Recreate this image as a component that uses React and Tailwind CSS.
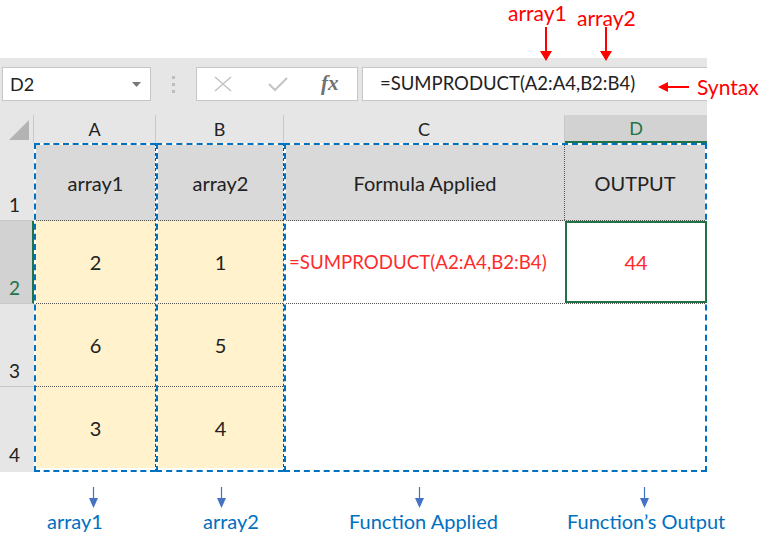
import React from 'react';

const FONT = { fontFamily: 'Lato, "Open Sans", Arial, sans-serif' };

const DownArrow = ({ color = '#ff0000', h = 35, w = 12, stroke = 2 }) => (
  <svg width={w} height={h} viewBox={`0 0 ${w} ${h}`}>
    <line x1={w / 2} y1="0" x2={w / 2} y2={h - 8} stroke={color} strokeWidth={stroke} />
    <polygon points={`0,${h - 10} ${w},${h - 10} ${w / 2},${h}`} fill={color} />
  </svg>
);

const FormulaBar = () => (
  <div className="flex items-start h-[57px] pt-[9px]">
    <div className="ml-[2px] w-[149px] h-[34px] bg-white border border-[#c6c6c6] flex items-center justify-between pl-[7px] pr-[9px]">
      <span className="text-[18px] text-[#222]">D2</span>
      <svg width="9" height="5" viewBox="0 0 9 5">
        <polygon points="0,0 9,0 4.5,5" fill="#777" />
      </svg>
    </div>
    <div className="w-[45px] h-[34px] flex flex-col items-center justify-center gap-[4px]">
      <div className="w-[3px] h-[3px] bg-[#bdbdbd]" />
      <div className="w-[3px] h-[3px] bg-[#bdbdbd]" />
      <div className="w-[3px] h-[3px] bg-[#bdbdbd]" />
    </div>
    <div className="w-[162px] h-[34px] bg-white border border-[#c6c6c6] flex items-center">
      <svg className="ml-[16px]" width="20" height="16" viewBox="0 0 20 16">
        <path d="M2 1 L18 15 M18 1 L2 15" stroke="#c4c4c4" strokeWidth="1.6" />
      </svg>
      <svg className="ml-[35px]" width="20" height="16" viewBox="0 0 20 16">
        <path d="M1 8 L7 14 L19 2" stroke="#c4c4c4" strokeWidth="2" fill="none" />
      </svg>
      <span
        className="ml-[33px] text-[21px] italic font-bold text-[#707070]"
        style={{ fontFamily: '"Liberation Serif", "DejaVu Serif", serif' }}
      >
        fx
      </span>
    </div>
    <div className="ml-[4px] flex-1 h-[34px] bg-white border-y border-l border-[#c6c6c6] flex items-center pl-[17px]">
      <span className="text-[18.5px] text-[#222]">=SUMPRODUCT(A2:A4,B2:B4)</span>
    </div>
  </div>
);

const ColumnHeaders = () => (
  <div className="flex h-[28px] text-[18px] text-[#222]">
    <div className="w-[34px] border-r border-[#c8c8c8] flex items-end justify-end pr-[4px] pb-[3px]">
      <svg width="20" height="20" viewBox="0 0 20 20">
        <polygon points="20,0 20,20 0,20" fill="#b3b3b3" />
      </svg>
    </div>
    <div className="w-[122px] border-r border-[#c8c8c8] flex items-center justify-center">A</div>
    <div className="w-[128px] border-r border-[#c8c8c8] flex items-center justify-center">B</div>
    <div className="w-[281px] border-r border-[#c8c8c8] flex items-center justify-center">C</div>
    <div className="w-[142px] bg-[#d2d2d2] border-b-2 border-[#217346] text-[#217346] flex items-center justify-center">
      D
    </div>
  </div>
);

const RowHeaders = () => (
  <div className="w-[34px] flex flex-col text-[19px] text-[#222]">
    <div className="h-[78px] border-b border-[#c8c8c8] flex items-end pl-[9px] pb-[1px]">1</div>
    <div className="h-[83px] bg-[#d2d2d2] border-r-2 border-[#217346] border-b border-b-[#c8c8c8] text-[#217346] flex items-end pl-[9px] pb-[1px]">
      2
    </div>
    <div className="h-[83px] border-b border-[#c8c8c8] flex items-end pl-[9px] pb-[1px]">3</div>
    <div className="h-[83px] flex items-end pl-[9px] pb-[1px]">4</div>
  </div>
);

const ArrayColumn = ({ width, title, values }) => (
  <div
    className={`${width} flex flex-col border-y-2 border-l-2 border-dashed border-[#0070c0] border-r border-r-[#444] text-[20px] text-[#222]`}
  >
    <div className="h-[76px] bg-[#d9d9d9] border-b border-dotted border-[#555] flex items-center justify-center">
      {title}
    </div>
    <div className="h-[83px] bg-[#fff2cc] border-b border-dotted border-[#555] flex items-center justify-center">
      {values[0]}
    </div>
    <div className="h-[83px] bg-[#fff2cc] border-b border-dotted border-[#555] flex items-center justify-center">
      {values[1]}
    </div>
    <div className="h-[81px] bg-[#fff2cc] flex items-center justify-center">{values[2]}</div>
  </div>
);

const FormulaRange = () => (
  <div className="w-[423px] flex flex-col border-2 border-dashed border-[#0070c0] text-[20px]">
    <div className="h-[76px] flex border-b border-dotted border-[#555] bg-[#d9d9d9] text-[#222]">
      <div className="w-[279px] border-r border-dotted border-[#555] flex items-center justify-center">
        Formula Applied
      </div>
      <div className="flex-1 flex items-center justify-center">OUTPUT</div>
    </div>
    <div className="h-[83px] flex border-b border-dotted border-[#555] text-[#ff2b2b]">
      <div className="w-[279px] flex items-center pl-[3px] text-[18.7px]">=SUMPRODUCT(A2:A4,B2:B4)</div>
      <div className="flex-1 -mr-[2px] border-2 border-[#217346] flex items-center justify-center">44</div>
    </div>
    <div className="h-[166px] bg-white" />
  </div>
);

const Callout = ({ className }) => (
  <div className={`flex flex-col items-center ${className}`}>
    <DownArrow color="#4472c4" h={21} w={9} stroke={1.2} />
  </div>
);

const LeftArrow = () => (
  <svg width="31" height="12" viewBox="0 0 31 12">
    <line x1="8" y1="6" x2="31" y2="6" stroke="#ff0000" strokeWidth="2" />
    <polygon points="0,6 10,1 10,11" fill="#ff0000" />
  </svg>
);

export default function App() {
  return (
    <div className="relative w-[760px] h-[540px] bg-white overflow-hidden" style={FONT}>
      {/* red call-outs above the formula bar */}
      <div className="relative h-[58px]">
        <span className="absolute left-[508px] top-[2px] text-[21px] leading-none text-[#ff0000]">array1</span>
        <span className="absolute left-[577px] top-[7px] text-[21px] leading-none text-[#ff0000]">array2</span>
        <div className="absolute left-[540px] top-[27px] z-10">
          <DownArrow h={34} />
        </div>
        <div className="absolute left-[600px] top-[27px] z-10">
          <DownArrow h={34} />
        </div>
      </div>

      <div className="w-[707px] bg-[#e6e6e6]">
        <FormulaBar />
        <ColumnHeaders />
      </div>
      <div className="absolute left-[658px] top-[76px] flex items-center gap-[8px]">
        <LeftArrow />
        <span className="text-[21px] text-[#ff0000] leading-none">Syntax</span>
      </div>

      <div className="flex w-[707px]">
        <div className="bg-[#e6e6e6]">
          <RowHeaders />
        </div>
        <ArrayColumn width="w-[122px]" title="array1" values={['2', '6', '3']} />
        <ArrayColumn width="w-[128px]" title="array2" values={['1', '5', '4']} />
        <FormulaRange />
      </div>

      {/* blue call-outs below the table */}
      <div className="flex h-[37px] pt-[15px]">
        <Callout className="ml-[89px]" />
        <Callout className="ml-[119px]" />
        <Callout className="ml-[189px]" />
        <Callout className="ml-[216px]" />
      </div>
      <div className="flex text-[20px] text-[#0070c0] leading-none pt-[2px]">
        <span className="ml-[47px] w-[156px]">array1</span>
        <span className="w-[146px]">array2</span>
        <span className="w-[218px]">Function Applied</span>
        <span>Function’s Output</span>
      </div>
    </div>
  );
}
